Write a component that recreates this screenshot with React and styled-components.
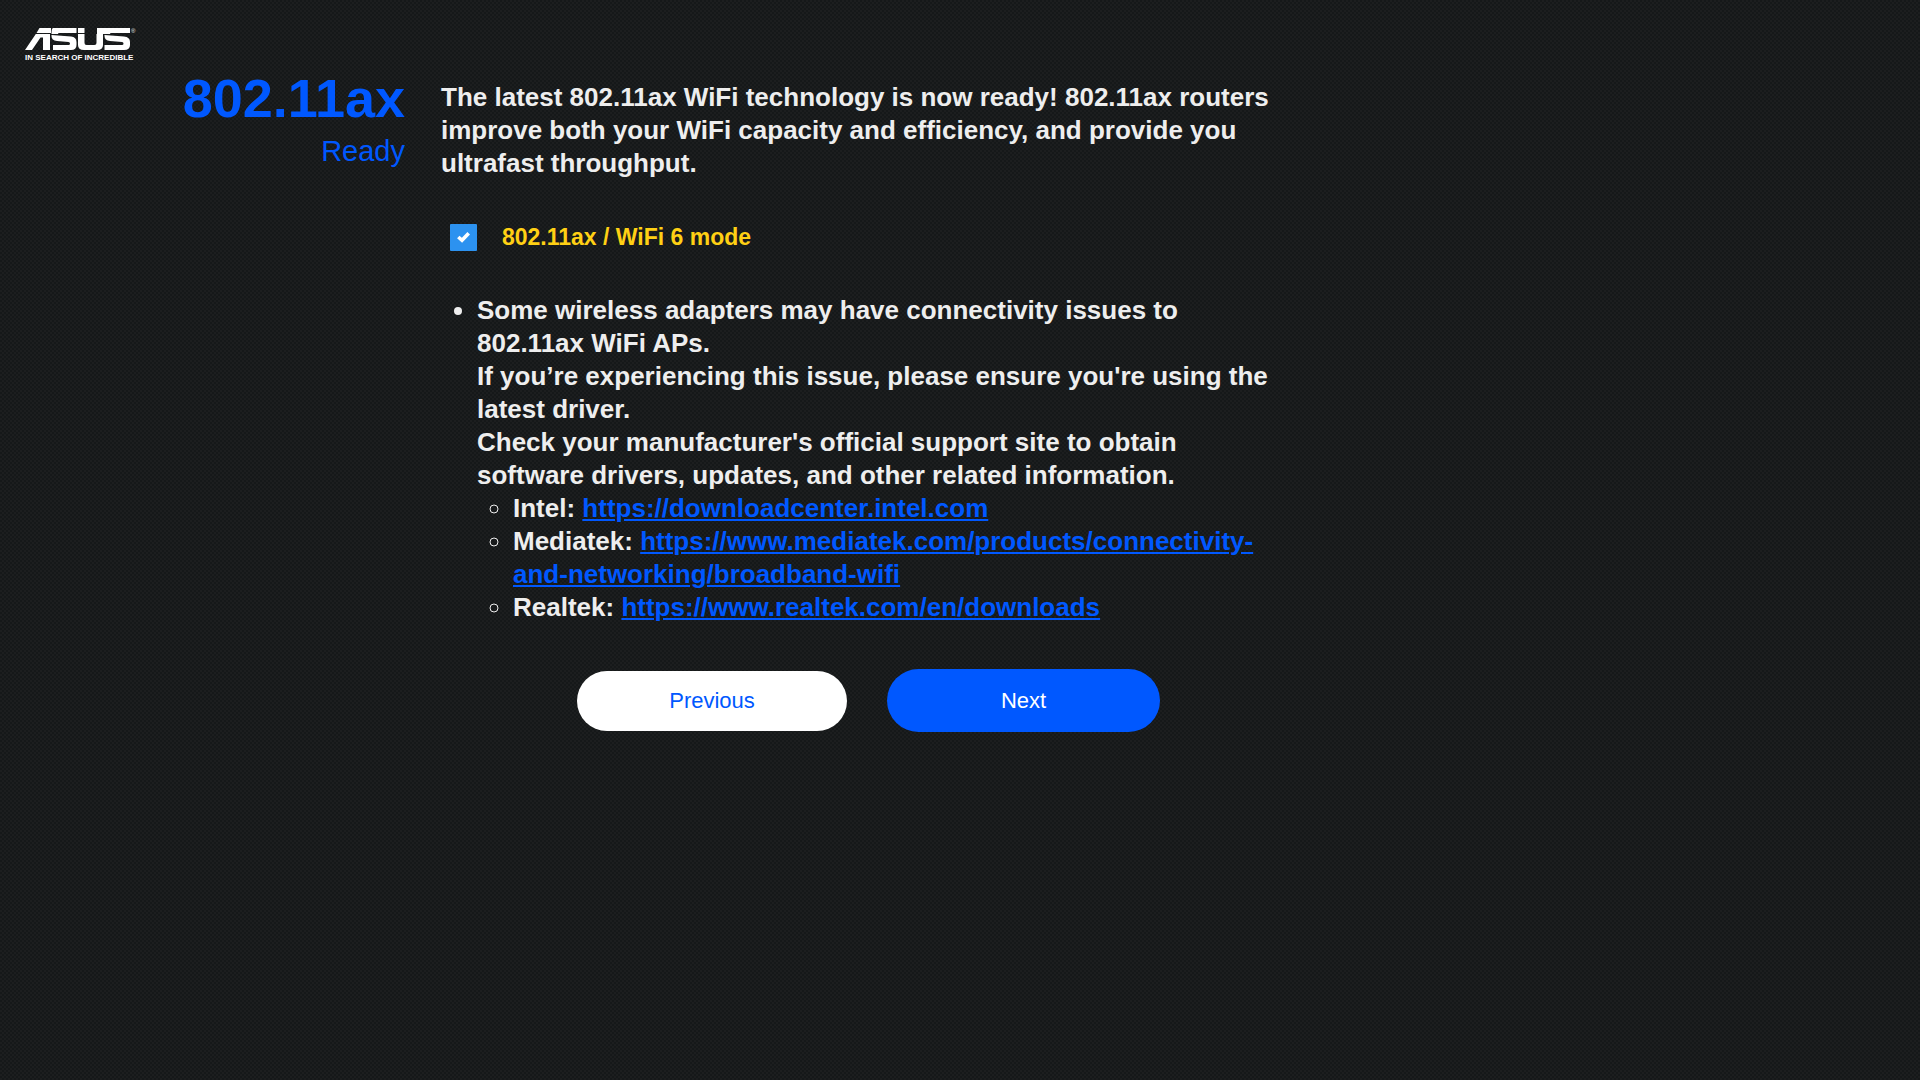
import { useState } from "react";
import styled, { createGlobalStyle } from "styled-components";

const blue = "#0058ff";

const GlobalStyle = createGlobalStyle`
  body{
    margin: 0;
    min-height: 100vh;
    background-color: #1c1e1f;
    background-image:
      radial-gradient(circle at 1px 1px, #151819 1px, transparent 1px),
      radial-gradient(circle at 3px 3px, #151819 1px, transparent 1px);
    background-size: 4px 4px;
    color: #eeeeee;
    font-family: "Liberation Sans", Arial, sans-serif;
  }
`

const drivers = [
  { name: "Intel", url: "https://downloadcenter.intel.com" },
  { name: "Mediatek", url: "https://www.mediatek.com/products/connectivity-and-networking/broadband-wifi" },
  { name: "Realtek", url: "https://www.realtek.com/en/downloads" },
]

const Logo = () => (
  <LogoBox>
    <LogoRow>
      <LogoMark viewBox="0 0 105 22" role="img" aria-label="ASUS">
        <g fill="#ffffff">
          <path d="M14.500 0H26V5H11.500Z" />
          <path d="M10.800 6H25V22H18V9.500L15.500 9.500L7 22H0Z" />
          <path d="M28 0H51.500V5H34Q33 5 33 6H26.500Q26.500 0 28 0Z" />
          <path d="M26.500 7L46 8.500Q51.500 9 51.500 14V17Q51.500 22 46 22H28V17H43.500Q45 17 45 15.500Q45 14 43.500 14L32 13Q26.500 12.500 26.500 8Z" />
          <path d="M53 0H59.500V5H53Z" />
          <path d="M53 6H59.500V15Q59.500 17 61.500 17H69.500Q71.500 17 71.500 15V6H78V17Q78 22 72 22H59Q53 22 53 17Z" />
          <path d="M72 0H105V5H86Q85 5 85 6H72Z" />
          <path d="M79.500 7L99 8.500Q105 9 105 14V17Q105 22 99 22H79.500V17H97Q98.500 17 98.500 15.500Q98.500 14 97 14L85 13Q79.500 12.500 79.500 8Z" />
        </g>
      </LogoMark>
      <Registered>®</Registered>
    </LogoRow>
    <Tagline>IN SEARCH OF INCREDIBLE</Tagline>
  </LogoBox>
)

const App = () => {
  const [axMode, setAxMode] = useState(true)
  return (
    <>
      <GlobalStyle />
      <Header>
        <Logo />
      </Header>
      <Main>
        <TitleColumn>
          <Title>802.11ax</Title>
          <Subtitle>Ready</Subtitle>
        </TitleColumn>
        <Content>
          <Intro>
            The latest 802.11ax WiFi technology is now ready! 802.11ax routers improve both your WiFi capacity and efficiency, and provide you ultrafast throughput.
          </Intro>
          <ModeRow>
            <Checkbox id="ax-mode" type="checkbox" checked={axMode} onChange={() => { setAxMode(!axMode) }} />
            <ModeLabel htmlFor="ax-mode">802.11ax / WiFi 6 mode</ModeLabel>
          </ModeRow>
          <Notes>
            <li>
              Some wireless adapters may have connectivity issues to 802.11ax WiFi APs.
              <br />
              If you’re experiencing this issue, please ensure you're using the latest driver.
              <br />
              Check your manufacturer's official support site to obtain software drivers, updates, and other related information.
              <DriverList>
                {drivers.map(({ name, url }) => {
                  return (
                    <li key={name}>{name}: <DriverLink href={url}>{url}</DriverLink></li>
                  )
                })}
              </DriverList>
            </li>
          </Notes>
          <Buttons>
            <Button type="button">Previous</Button>
            <Button type="button" $primary>Next</Button>
          </Buttons>
        </Content>
      </Main>
    </>
  )
}

const Header = styled.header`
  display: flex;
  height: 42px;
  padding: 28px 25px 0;
`
const LogoBox = styled.div`
  display: flex;
  flex-direction: column;
  gap: 2px;
`
const LogoRow = styled.div`
  display: flex;
  gap: 1px;
`
const LogoMark = styled.svg`
  width: 105px;
  height: 22px;
`
const Registered = styled.span`
  font-size: 6px;
  line-height: 6px;
`
const Tagline = styled.span`
  color: #ffffff;
  font-size: 8px;
  font-weight: bold;
  line-height: 12px;
  white-space: nowrap;
`
const Main = styled.main`
  display: flex;
  gap: 36px;
  max-width: 1090px;
  padding: 0 24px 40px 180px;
`
const TitleColumn = styled.div`
  flex: 0 0 225px;
  text-align: right;
`
const Title = styled.h1`
  margin: 0;
  color: ${blue};
  font-size: 54px;
  line-height: 56px;
`
const Subtitle = styled.p`
  margin: 7px 0 0;
  color: ${blue};
  font-size: 29px;
  line-height: 36px;
`
const Content = styled.div`
  flex: 1;
  font-size: 26px;
  font-weight: bold;
  line-height: 33px;
`
const Intro = styled.p`
  margin: 11px 0 0;
`
const ModeRow = styled.div`
  display: flex;
  align-items: center;
  gap: 25px;
  margin-top: 41px;
  padding-left: 9px;
`
const Checkbox = styled.input`
  appearance: none;
  width: 27px;
  height: 27px;
  margin: 0;
  border-radius: 1px;
  background: #ffffff;
  cursor: pointer;
  &:checked{
    background: #2c92f0 url("data:image/svg+xml,%3Csvg xmlns='http://www.w3.org/2000/svg' viewBox='0 0 27 27'%3E%3Cpath d='M8.300 13L12 16.300L18.700 9.300' fill='none' stroke='white' stroke-width='3.600'/%3E%3C/svg%3E");
  }
`
const ModeLabel = styled.label`
  color: #ffd014;
  font-size: 23px;
  cursor: pointer;
`
const Notes = styled.ul`
  margin: 40px 0 0;
  padding-left: 36px;
`
const DriverList = styled.ul`
  margin: 0;
  padding-left: 36px;
`
const DriverLink = styled.a`
  color: ${blue};
`
const Buttons = styled.div`
  display: flex;
  align-items: center;
  gap: 40px;
  margin-top: 45px;
  padding-left: 136px;
`
const Button = styled.button`
  width: ${({ $primary }) => $primary ? "273px" : "270px"};
  height: ${({ $primary }) => $primary ? "63px" : "60px"};
  border: none;
  border-radius: 32px;
  background: ${({ $primary }) => $primary ? blue : "#ffffff"};
  color: ${({ $primary }) => $primary ? "#ffffff" : blue};
  font-family: inherit;
  font-size: 22px;
  cursor: pointer;
`
export default App
